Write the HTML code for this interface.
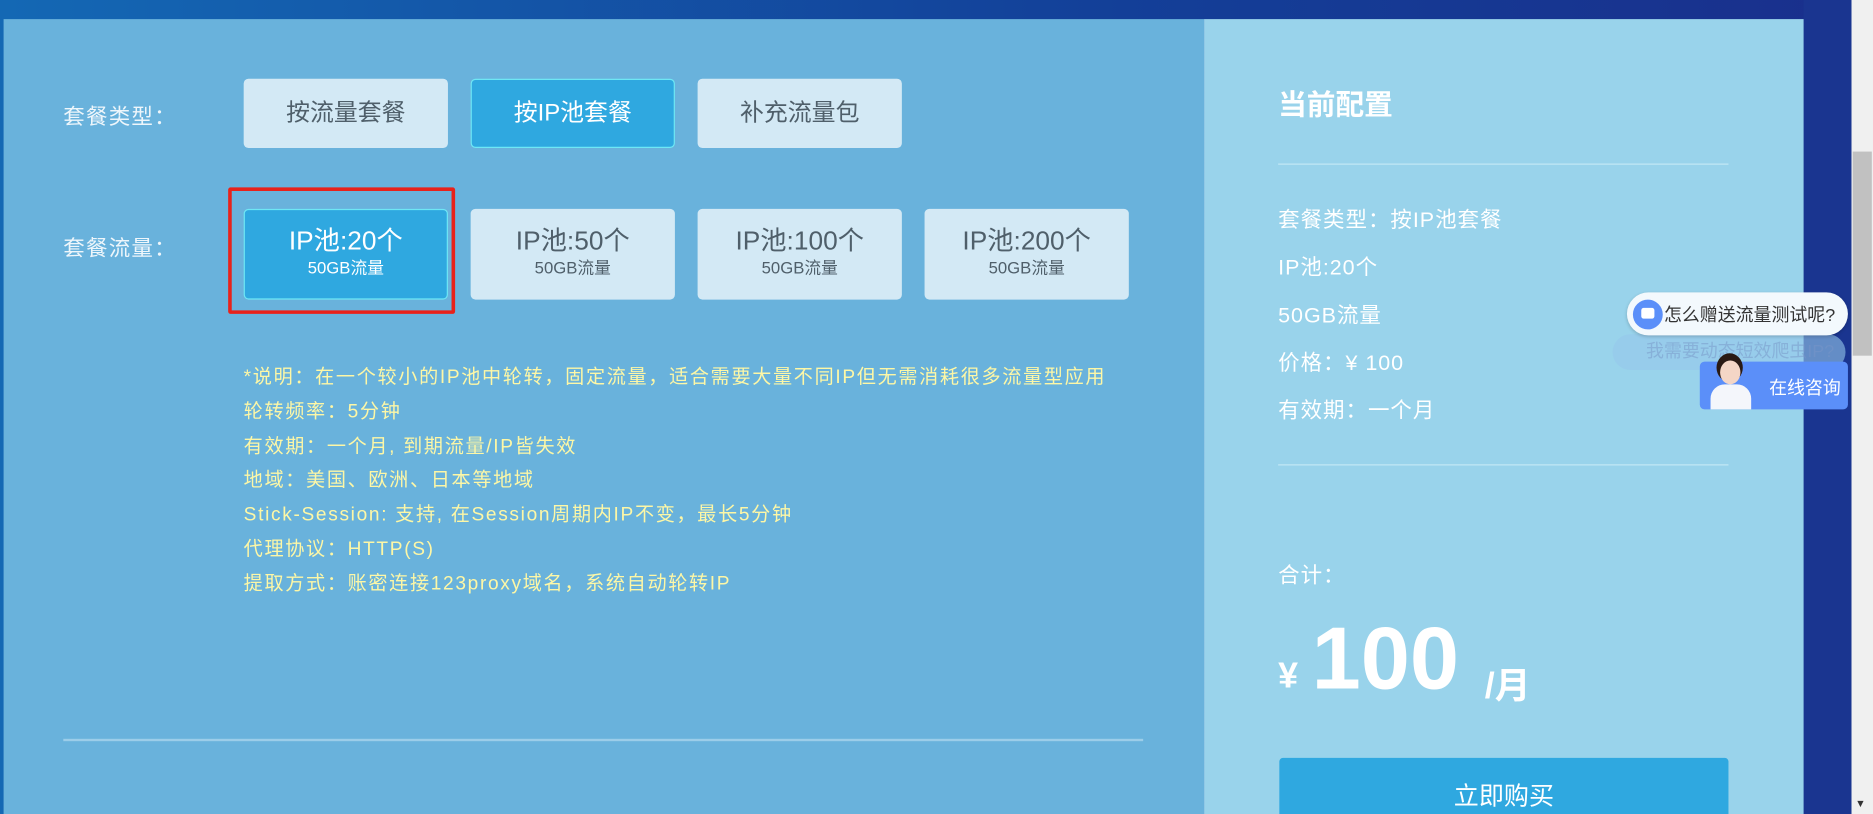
<!DOCTYPE html>
<html><head><meta charset="utf-8"><style>
html,body{margin:0;padding:0;width:1873px;height:814px;overflow:hidden;background:#1a3a92}
#w{position:absolute;left:0;top:0;width:1568px;height:682px;transform:scale(1.19452,1.19355);transform-origin:0 0;font-family:"Liberation Sans","Noto Sans CJK SC",sans-serif;overflow:hidden;background:linear-gradient(90deg,#1468b4 0%,#133f98 60%,#1a2f8c 100%)}
.a{position:absolute}
.lp{left:3px;top:16px;width:1005px;height:666px;background:#69b2dc}
.rp{left:1008px;top:16px;width:502px;height:666px;background:#99d3eb}
.lbl{color:#eef6fb;font-size:18px;letter-spacing:1px}
.btn{position:absolute;background:#d3e9f5;border-radius:4px;color:#4f5f6a;text-align:center;box-sizing:border-box}
.on{background:#2fa8e0;color:#fff;border:1px solid #6ee7f5}
.t1{font-size:20px;line-height:58px}
.big{font-size:22px;margin-top:14px;line-height:26px}
.sm{font-size:14px;line-height:18px}
.desc{left:204px;top:303px;color:#fdf7a6;font-size:16px;line-height:28.8px;letter-spacing:1.4px}
.rt{color:#fff;font-size:18px;letter-spacing:0.8px}
.hl{height:1px;background:#c3e8f6}
</style></head><body><div id="w">
<div class="a lp"></div>
<div class="a rp"></div>
<div class="a" style="left:1510px;top:0;width:40px;height:682px;background:#1a3590"></div>
<div class="a" style="left:1550px;top:0;width:18px;height:682px;background:#f0f0f0"></div>
<div class="a" style="left:1551px;top:127px;width:16px;height:171px;background:#c1c1c1"></div>
<div class="a" style="left:1553px;top:668px;font-size:9px;color:#333">▼</div>

<div class="a lbl" style="left:53px;top:84px">套餐类型：</div>
<div class="btn t1" style="left:204px;top:66px;width:171px;height:58px">按流量套餐</div>
<div class="btn t1 on" style="left:394px;top:66px;width:171px;height:58px;line-height:56px">按IP池套餐</div>
<div class="btn t1" style="left:584px;top:66px;width:171px;height:58px">补充流量包</div>

<div class="a lbl" style="left:53px;top:194px">套餐流量：</div>
<div class="a" style="left:191px;top:157px;width:184px;height:100px;border:3px solid #e8221b;border-radius:2px"></div>
<div class="btn on" style="left:204px;top:175px;width:171px;height:76px"><div class="big" style="margin-top:13px">IP池:20个</div><div class="sm">50GB流量</div></div>
<div class="btn" style="left:394px;top:175px;width:171px;height:76px"><div class="big">IP池:50个</div><div class="sm">50GB流量</div></div>
<div class="btn" style="left:584px;top:175px;width:171px;height:76px"><div class="big">IP池:100个</div><div class="sm">50GB流量</div></div>
<div class="btn" style="left:774px;top:175px;width:171px;height:76px"><div class="big">IP池:200个</div><div class="sm">50GB流量</div></div>

<div class="a desc">*说明：在一个较小的IP池中轮转，固定流量，适合需要大量不同IP但无需消耗很多流量型应用<br>轮转频率：5分钟<br>有效期：一个月, 到期流量/IP皆失效<br>地域：美国、欧洲、日本等地域<br>Stick-Session: 支持, 在Session周期内IP不变，最长5分钟<br>代理协议：HTTP(S)<br>提取方式：账密连接123proxy域名，系统自动轮转IP</div>
<div class="a" style="left:53px;top:619px;width:904px;height:2px;background:#9ccde9"></div>

<div class="a" style="left:1070px;top:68px;color:#fff;font-size:24px;font-weight:bold">当前配置</div>
<div class="a hl" style="left:1070px;top:137px;width:377px"></div>
<div class="a rt" style="left:1070px;top:164px;line-height:40px">套餐类型：按IP池套餐<br>IP池:20个<br>50GB流量<br>价格：¥ 100<br>有效期：一个月</div>
<div class="a hl" style="left:1070px;top:389px;width:377px"></div>
<div class="a rt" style="left:1070px;top:468px">合计：</div>
<div class="a" style="left:1070px;top:550px;color:#fff;font-size:30px;font-weight:bold">¥</div>
<div class="a" style="left:1098px;top:507px;color:#fff;font-size:74px;font-weight:bold;line-height:90px">100</div>
<div class="a" style="left:1243px;top:550px;color:#fff;font-size:30px;font-weight:bold">/月</div>
<div class="a" style="left:1071px;top:635px;width:376px;height:60px;background:#2fa8e0;border-radius:3px;color:#fff;font-size:21px;text-align:center;line-height:66px">立即购买</div>

<div class="a" style="left:1350px;top:280px;width:195px;height:30px;border-radius:16px;background:rgba(150,200,235,.6);color:rgba(120,150,200,.5);font-size:15px;line-height:30px;padding-left:28px;box-sizing:border-box">我需要动态短效爬虫IP?</div>
<div class="a" style="left:1362px;top:245px;width:185px;height:36px;border-radius:18px;background:#f3f9fd;box-shadow:0 1px 3px rgba(0,0,0,.2)"></div>
<div class="a" style="left:1367px;top:251px;width:25px;height:25px;border-radius:50%;background:#5b8ff9"></div>
<div class="a" style="left:1374px;top:258px;width:11px;height:9px;border-radius:2px;background:#fff"></div>
<div class="a" style="left:1393px;top:253px;font-size:15px;color:#333">怎么赠送流量测试呢?</div>
<div class="a" style="left:1423px;top:303px;width:124px;height:40px;border-radius:4px;background:#5b8ff9"></div>
<div class="a" style="left:1437px;top:296px;width:22px;height:24px;border-radius:50%;background:#2a1a14"></div>
<div class="a" style="left:1440px;top:302px;width:17px;height:20px;border-radius:50%;background:#f4d6c6"></div>
<div class="a" style="left:1432px;top:322px;width:34px;height:21px;border-radius:12px 12px 0 0;background:#f4f6fb"></div>
<div class="a" style="left:1481px;top:314px;font-size:15px;color:#fff">在线咨询</div>
</div></body></html>
